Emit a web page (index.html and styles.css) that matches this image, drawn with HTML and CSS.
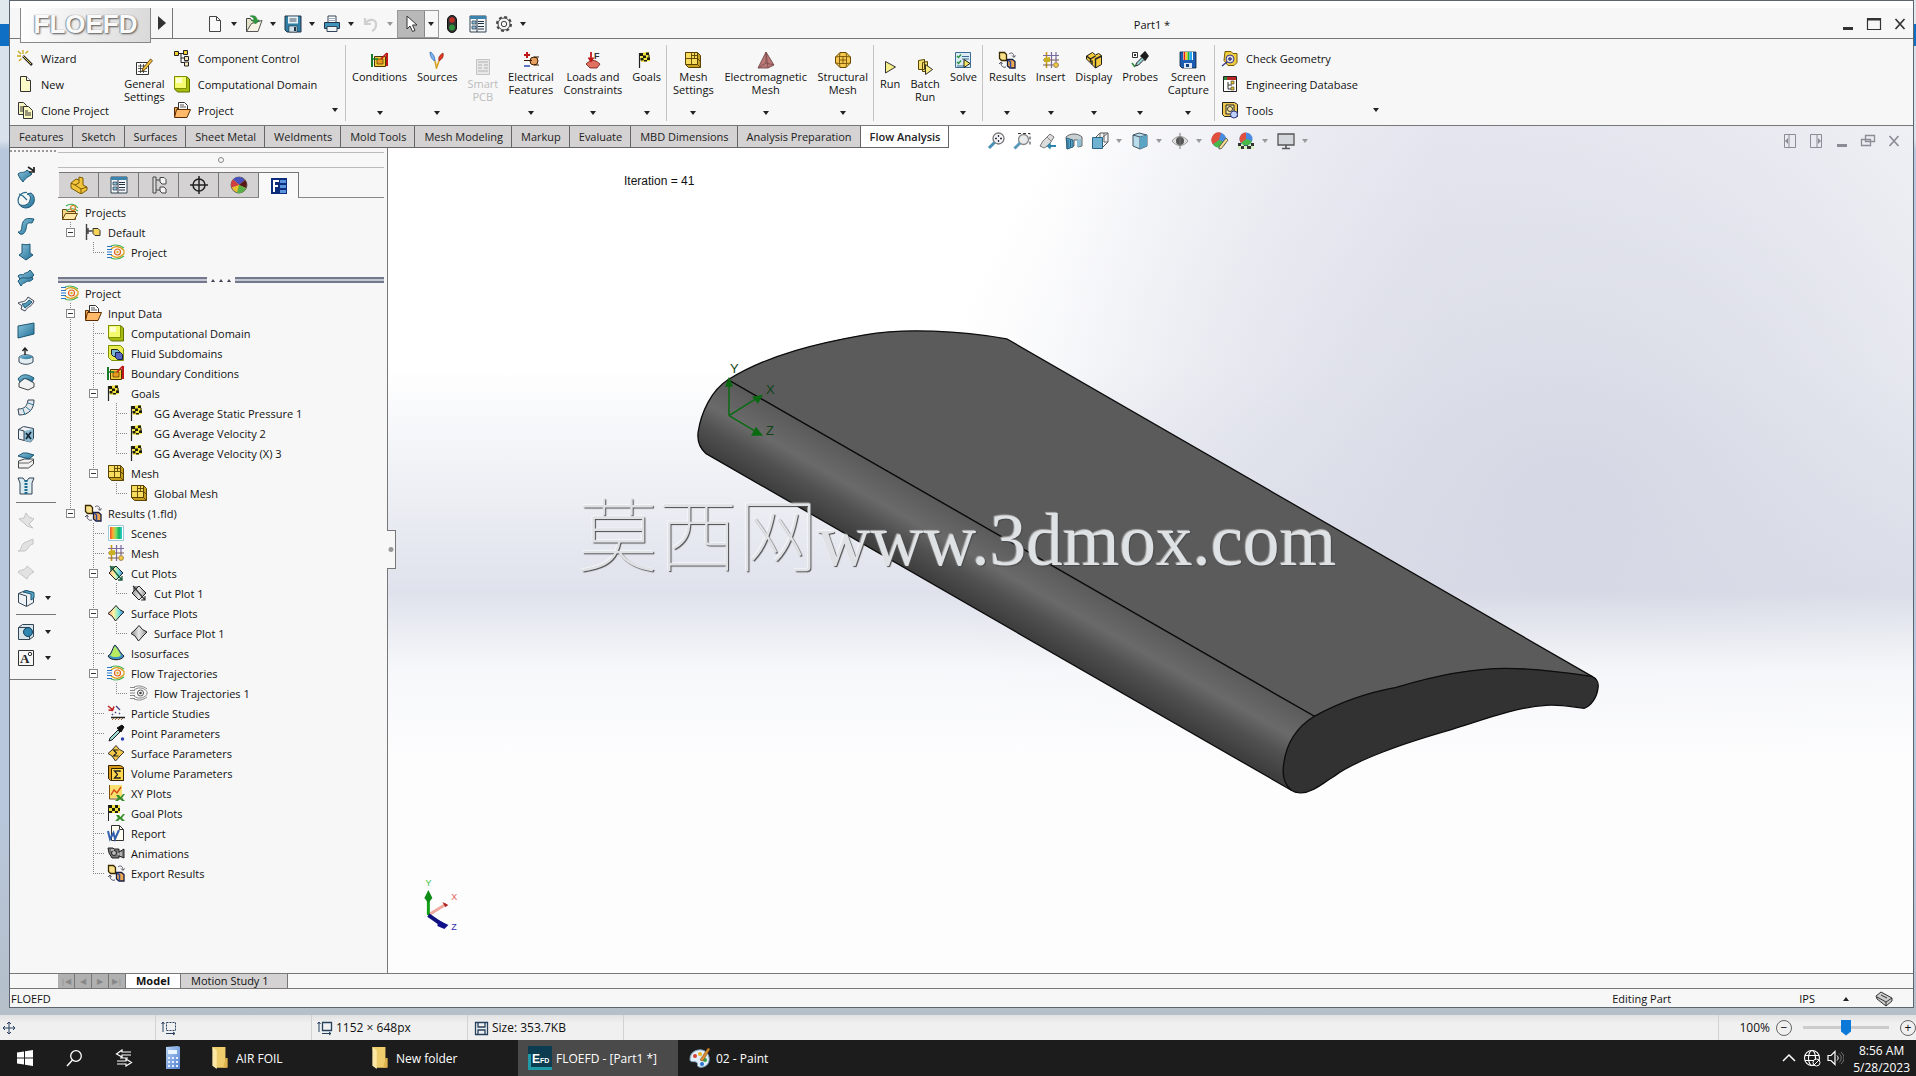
FILE: index.html
```html
<!DOCTYPE html>
<html lang="en">
  <head>
    <meta charset="UTF-8" />
    <meta name="viewport" content="width=device-width, initial-scale=1.0" />
    <title>FLOEFD - [Part1 *]</title>
    <link rel="stylesheet" href="styles.css">
  </head>
  <body>
    <!-- icon sprite -->
    <svg class="sprite" aria-hidden="true">
      <defs>
        <linearGradient id="g-blue" x1="0" y1="0" x2="1" y2="1"><stop offset="0" stop-color="#8cc4dc"/><stop offset="1" stop-color="#1f6f96"/></linearGradient>
        <linearGradient id="g-rainbow" x1="0" x2="1"><stop offset="0" stop-color="#f0502c"/><stop offset=".25" stop-color="#ffb030"/><stop offset=".5" stop-color="#7be06a"/><stop offset=".75" stop-color="#10b060"/><stop offset="1" stop-color="#2fd0d8"/></linearGradient>
        <linearGradient id="g-plot" x1="0" x2="1"><stop offset="0" stop-color="#ff9c7c"/><stop offset=".35" stop-color="#fff3a0"/><stop offset=".65" stop-color="#7fe8d8"/><stop offset="1" stop-color="#3c7ce0"/></linearGradient>
        <linearGradient id="g-gray" x1="0" x2="1"><stop offset="0" stop-color="#8a8a8a"/><stop offset=".5" stop-color="#e8e8e8"/><stop offset="1" stop-color="#909090"/></linearGradient>
        <linearGradient id="g-calc" x1="0" y1="0" x2="1" y2="1"><stop offset="0" stop-color="#b8d4f4"/><stop offset="1" stop-color="#4f7ed0"/></linearGradient>
      </defs>

      <!-- quick access -->
      <symbol id="i-doc" viewBox="0 0 18 18"><path d="M3.500 1.500h7l4 4v11h-11z" fill="#fafafa" stroke="#444"/><path d="M10.500 1.500v4h4" fill="none" stroke="#444"/></symbol>
      <symbol id="i-open" viewBox="0 0 18 18"><path d="M1.500 16.500v-13h4l1 2h6v11z" fill="#e4e2c8" stroke="#444"/><path d="M1.500 16.500l5-8 10.500-3-4 11z" fill="#f6f4e4" stroke="#555"/><path d="M5 1c5-1 7 1 7 4h2.500L10.500 9 6.500 5H9c0-2-1-3-4-4z" fill="#2f9a3c" stroke="#1a6a24" stroke-width=".5"/></symbol>
      <symbol id="i-save" viewBox="0 0 18 18"><path d="M1 1h16v16H3l-2-2z" fill="#2f7fa6" stroke="#234"/><path d="M4 1.500h10v7H4z" fill="#e8f2f6"/><path d="M5.500 4h7M5.500 6h7" stroke="#456"/><path d="M5 11h8v6H5z" fill="#cfe0e8" stroke="#234" stroke-width=".6"/><path d="M10 12h2v4h-2z" fill="#234"/></symbol>
      <symbol id="i-print" viewBox="0 0 18 18"><path d="M5 1h8v7H5z" fill="#fff" stroke="#345"/><path d="M1.500 7.500h15v6h-15z" fill="#3f93bc" stroke="#234"/><path d="M4 11.500h10v5H4z" fill="#eef4f6" stroke="#345"/><path d="M6 3.500h6M6 5.500h6" stroke="#9ab"/></symbol>
      <symbol id="i-undo" viewBox="0 0 18 18"><path d="M3 3v6h6M3.500 8.500C7 3 15 4 14 10c0 3-2 5-4 6" fill="none" stroke="#cfcfcf" stroke-width="2.200"/></symbol>
      <symbol id="i-cursor" viewBox="0 0 18 18"><path d="M5 1v13l3-3 2.500 5.500 2.500-1L10.500 10H15z" fill="#fff" stroke="#333"/></symbol>
      <symbol id="i-traffic" viewBox="0 0 18 18"><rect x="4.500" y=".5" width="9" height="17" rx="4.500" fill="#333" stroke="#111"/><circle cx="9" cy="5" r="2.700" fill="#c22f26"/><circle cx="9" cy="12.500" r="2.900" fill="#2f8f3c"/></symbol>
      <symbol id="i-list" viewBox="0 0 18 18"><path d="M1 1h16v16H1z" fill="#f4f6f8" stroke="#345"/><path d="M1 1h16v3H1z" fill="#3b84ad"/><path d="M3 6h4v3H3zM3 11h4v3H3z" fill="#8cc0da" stroke="#234" stroke-width=".7"/><path d="M9 6.500h6M9 8.500h6M9 11.500h6M9 14h6M8 4v13" stroke="#234"/></symbol>
      <symbol id="i-gear" viewBox="0 0 18 18"><circle cx="9" cy="9" r="7" fill="none" stroke="#444" stroke-width="2" stroke-dasharray="3 2.500"/><circle cx="9" cy="9" r="6" fill="#f4f4f4" stroke="#444"/><circle cx="9" cy="9" r="2.700" fill="none" stroke="#444"/></symbol>

      <!-- ribbon -->
      <symbol id="i-wand" viewBox="0 0 18 18"><path d="M7 7l9 9" stroke="#222" stroke-width="2.500"/><path d="M7 7l8 8" stroke="#e8d25a"/><path d="M7 1v4M2 2l3 3M12 2L9.500 4.500M1 7h4M3 12l2.500-2.500" stroke="#c8a818" stroke-width="1.300"/></symbol>
      <symbol id="i-page" viewBox="0 0 18 18"><path d="M4.500 1.500h6l4 4v11h-10z" fill="#fbfbc8" stroke="#333"/><path d="M10.500 1.500v4h4" fill="#fff" stroke="#333"/></symbol>
      <symbol id="i-clone" viewBox="0 0 18 18"><path d="M2.500 1.500h5l3 3v9h-8z" fill="#f6f4c0" stroke="#333"/><path d="M7.500 5.500h5l4 4v8h-9z" fill="#fbf8c0" stroke="#333"/><path d="M4 6h4M4 8h3M4 10h3M9 10h3M9 12h6M9 14h6" stroke="#333"/></symbol>
      <symbol id="i-notes" viewBox="0 0 18 18"><path d="M1.500 4.500h12v12h-12z" fill="#fff" stroke="#333"/><path d="M3 8h9M3 10.500h9M3 13.500h9M5.500 6v9M8.500 6v9" stroke="#333" stroke-width=".8"/><path d="M8 10l7.500-9 2 1.700-7.500 9-3 1.500z" fill="#f0c040" stroke="#553300" stroke-width=".8"/></symbol>
      <symbol id="i-comp" viewBox="0 0 18 18"><path d="M1.500 2.500h4v4h-4zM10.500 1.500h4v4h-4z" fill="#f4d030" stroke="#222"/><path d="M5.500 4.500h5M8 4.500v9h3M8 9h4" fill="none" stroke="#222"/><path d="M11.500 7.500h4v4h-4zM11.500 13h4v4h-4z" fill="#f4e8c0" stroke="#222"/></symbol>
      <symbol id="i-cube" viewBox="0 0 18 18"><path d="M1.500 1.500h12l3 2.500v13h-12l-3-3z" fill="#a8bc10" stroke="#5c7000"/><path d="M1.500 1.500h12v12h-12z" fill="#f4fb70" stroke="#7c9000"/><path d="M3 3h6v5H3z" fill="#fdffd0"/></symbol>
      <symbol id="i-infolder" viewBox="0 0 18 18"><path d="M5.500 9V1.500h6l3 3V9" fill="#fff" stroke="#333"/><path d="M7 4h4M7 6h6" stroke="#555"/><path d="M1.500 15.500v-9h3v2h9" fill="#f0a850" stroke="#5a2c00"/><path d="M1.500 16.500l2-8h14l-3.500 8z" fill="#ffb968" stroke="#5a2c00"/></symbol>
      <symbol id="i-cond" viewBox="0 0 18 18"><path d="M3.500 5.500h11v10h-11z" fill="#f3c93a" stroke="#4a3500"/><path d="M6 8h6v5H6z" fill="#e89a20" stroke="#4a3500" stroke-width=".7"/><path d="M1 3v13" stroke="#187a28" stroke-width="2"/><path d="M2 8h5" stroke="#187a28" stroke-width="1.500"/><path d="M16 2v13" stroke="#c01818" stroke-width="2"/><path d="M10 8l6-6" stroke="#c01818" stroke-width="1.700"/></symbol>
      <symbol id="i-src" viewBox="0 0 18 18"><path d="M2 1c3 1 5 5 5 9-3-1-5-5-5-9z" fill="#7ab6f0" stroke="#2a5aa0" stroke-width=".7"/><path d="M15 2c1 4-1 6-4 8-1-4 1-6 4-8z" fill="#e03a22" stroke="#8a1a10" stroke-width=".7"/><path d="M7 10l1.500 7L11 10" fill="none" stroke="#d8a020" stroke-width="1.600"/></symbol>
      <symbol id="i-pcb" viewBox="0 0 18 18"><path d="M2.500 1.500h13v15h-13z" fill="#e8e8e8" stroke="#c4c4c4"/><path d="M4 4h10M4 7h4M10 7h4M4 10h4M10 10h4M4 13h10" stroke="#c4c4c4" stroke-width="1.500"/></symbol>
      <symbol id="i-elec" viewBox="0 0 18 18"><path d="M2 4h6M5 1v6" stroke="#c01818" stroke-width="2"/><path d="M2 15h6" stroke="#2848b8" stroke-width="1.500"/><circle cx="12" cy="10" r="4" fill="#e8a060" stroke="#3a1c00"/><path d="M2 9.500h8M12 6h5M12 14h5" stroke="#3a1c00"/></symbol>
      <symbol id="i-flag" viewBox="0 0 18 18"><path d="M1.500 2v15" stroke="#222" stroke-width="1.200"/><path d="M2 2l9-1 1 9-9 1z" fill="#f2e23c"/><path d="M2 2h3v3H2zM8 1.500h3v2.500H8zM5 4.500h3v2.500H5zM9 6.500h3V9H9zM2.500 7h3v2.500h-3zM10.500 4h1v2.500h-1zM6 9h3v1.500H6z" fill="#1c1c10"/></symbol>
      <symbol id="i-mesh" viewBox="0 0 18 18"><path d="M1.500 1.500h12l3 3v12h-12l-3-3z" fill="#c8a020" stroke="#5a4200"/><path d="M1.500 1.500h12v12h-12z" fill="#f8dc60" stroke="#5a4200"/><path d="M7.500 1.500v12M1.500 7.500h12M10.500 1.500v6M7.500 4.500h6M13.500 13.500l3 3M13.500 7.500l3 3" stroke="#5a4200" stroke-width=".9"/></symbol>
      <symbol id="i-em" viewBox="0 0 18 18"><path d="M9 1l8 13-6 3H1z" fill="#b87878" stroke="#6a3c3c" stroke-width=".8"/><path d="M9 1l2 16M1 17l8-5 8 2M9 1v11" stroke="#7c4a4a" stroke-width=".8" fill="none"/></symbol>
      <symbol id="i-struct" viewBox="0 0 18 18"><path d="M6 1.500h6L16.500 6v6L12 16.500H6L1.500 12V6z" fill="#f4c850" stroke="#6a4800"/><path d="M5.500 5.500h7v7h-7zM1.500 6l4-.5L6 1.500M12 1.500l.5 4 4 .5M16.500 12l-4 .5-.5 4M6 16.500l-.5-4-4-.5M9 5.500v7M5.500 9h7" fill="none" stroke="#6a4800" stroke-width=".8"/></symbol>
      <symbol id="i-run" viewBox="0 0 18 18"><path d="M4.500 3.500l10 5.500-10 6z" fill="#f6ec88" stroke="#333"/></symbol>
      <symbol id="i-batch" viewBox="0 0 18 18"><path d="M2.500 2.500l6-1v10h-6zM6.500 4.500l5-1v10h-5z" fill="#f4e070" stroke="#5a4600"/><path d="M9.500 6.500l7 5-7 5z" fill="#f8ec80" stroke="#333"/></symbol>
      <symbol id="i-solve" viewBox="0 0 18 18"><path d="M1.500 1.500h15v15h-15z" fill="#dcecf4" stroke="#3c6c94"/><path d="M3 5l1.500 1.500L7 3.500M3 11l1.500 1.500L7 9.500" fill="none" stroke="#28903c" stroke-width="1.300"/><path d="M8 5.500h7M8 8h7M3 15h7" stroke="#3c6c94"/><path d="M10 8.500l6 4-6 4z" fill="#f6e860" stroke="#222"/></symbol>
      <symbol id="i-results" viewBox="0 0 18 18"><path d="M1.500 1.500h5l2 2v6h-5l-2-2z" fill="#f8e088" stroke="#3a2800" stroke-width="1.300"/><path d="M9.500 8.500h5l2.500 2v6.500h-5l-2.500-2z" fill="#f0a850" stroke="#141c40" stroke-width="1.300"/><path d="M10 9l2.500 2v6" fill="none" stroke="#2848a0" stroke-width="1.500"/><path d="M11 3c2-2 5-1 5 3M3 12c0 3 2 5 5 4M14 4.500l2 2 1.500-2M4.500 13L3 11l-2 2" fill="none" stroke="#556"/></symbol>
      <symbol id="i-grid" viewBox="0 0 18 18"><path d="M4.500 1v16" stroke="#c89818" stroke-width="1.600"/><path d="M9.500 1v16M14 1v16M1 4.500h16" stroke="#7a6aa0" stroke-width="1.200"/><path d="M1 9h16M1 14h16" stroke="#7a5a50" stroke-width="1.200"/><path d="M2 7l6-1v5H2z" fill="#c8b020"/><path d="M12 12h4v4h-4z" fill="#f4cc50" stroke="#a07818" stroke-width=".6"/></symbol>
      <symbol id="i-display" viewBox="0 0 18 18"><path d="M1.500 5l6-3.500 3 2.500 3-1.500 3 2v9l-6 3.500-9-9z" fill="#f2c83c" stroke="#222"/><path d="M1.500 5l4 3v3M5.500 8l5-3M10.500 17V8l6-3M7 9.500v4" fill="none" stroke="#222" stroke-width="1.400"/></symbol>
      <symbol id="i-probe" viewBox="0 0 18 18"><path d="M1.500 1.500h5v5h-5z" fill="#fff" stroke="#333"/><path d="M3 3h2v2H3z" fill="#333"/><path d="M10 5l4 4 3-4-3-4z" fill="#1c1c1c" stroke="#1c1c1c" stroke-width="1.500"/><path d="M11 6.500l-5.500 5.500-1 3 3-1 6-6z" fill="#9ad8d8" stroke="#222"/><path d="M1 12l3 4" stroke="#2a8a3c" stroke-width="1.500"/></symbol>
      <symbol id="i-capture" viewBox="0 0 18 18"><path d="M1 1h16v16H3l-2-2z" fill="#1c5cb4" stroke="#123" stroke-width=".8"/><path d="M4 1h10v8H4z" fill="#fff"/><path d="M4.500 1h2v8h-2z" fill="#e02818"/><path d="M6.500 1h2v8h-2z" fill="#f8d820"/><path d="M8.500 1h2v8h-2z" fill="#28b03c"/><path d="M10.500 1h2.500v8h-2.500z" fill="#28a8f0"/><path d="M5 12h8v5H5z" fill="#dce8f4"/><path d="M7 13h3v3H7z" fill="#123c80"/></symbol>
      <symbol id="i-checkgeo" viewBox="0 0 18 18"><path d="M4 2.500h6l2 2h4v9l-3 3H7l-4-5z" fill="#f0cc40" stroke="#7a5c00"/><circle cx="9" cy="10" r="4" fill="#dce0f8" fill-opacity=".8" stroke="#3a3a90"/><path d="M7 10h4M9 8v4M6 13l-5 4" stroke="#3a3a90" stroke-width="1.400"/></symbol>
      <symbol id="i-engdb" viewBox="0 0 18 18"><path d="M2.500 1.500h13v15h-13z" fill="#fff" stroke="#222"/><path d="M3 2h12v3H3z" fill="#b82828"/><path d="M3 2h3v3H3z" fill="#2a8a3c"/><path d="M7 7v7h4M7 10h4" fill="none" stroke="#333"/><path d="M10 6h3v3h-3zM10 12h3v3h-3z" fill="#e8c030" stroke="#333" stroke-width=".6"/></symbol>
      <symbol id="i-tools" viewBox="0 0 18 18"><path d="M1.500 1.500h12l3 2v12h-13l-2-2z" fill="#f0c850" stroke="#222"/><path d="M5 4h8v9H5z" fill="#fbe8a0" stroke="#222"/><circle cx="9" cy="8" r="2.500" fill="none" stroke="#333"/><circle cx="13" cy="13.500" r="3.500" fill="#c0d0f8" stroke="#2a3c8a"/></symbol>

      <!-- view toolbar -->
      <symbol id="i-zfit" viewBox="0 0 18 18"><circle cx="11.500" cy="6.500" r="5.500" fill="#f2f4f6" stroke="#777" stroke-width="1.300"/><path d="M11.500 3v2M11.500 8v2M8 6.500h2M13 6.500h2" stroke="#334" stroke-width="1.300"/><path d="M7.500 10.500L2 16" stroke="#4a8fb4" stroke-width="3"/></symbol>
      <symbol id="i-zarea" viewBox="0 0 18 18"><path d="M5 1.500h12v12" fill="none" stroke="#333" stroke-dasharray="3 2"/><circle cx="10.500" cy="7.500" r="5" fill="#e8eaec" stroke="#888" stroke-width="1.300"/><path d="M7 11l-5.500 5.500" stroke="#5a98ba" stroke-width="3"/></symbol>
      <symbol id="i-prev" viewBox="0 0 18 18"><path d="M1 14l3-5 7-7 4 3-5 8-5 3z" fill="#dcdcdc" stroke="#777"/><path d="M8 5l4 4" stroke="#888"/><path d="M9 14h8M11.500 11.500L9 14l2.500 2.500" stroke="#2f86ac" stroke-width="1.800" fill="none"/></symbol>
      <symbol id="i-section" viewBox="0 0 18 18"><path d="M1 5c4-4 12-4 16 0v9l-4 1V8H9v6l-7 3z" fill="#c8d0d4" stroke="#555" stroke-width=".9"/><path d="M1.500 6L8 8v7l-6 2z" fill="#58a4c8" stroke="#2a6484"/><path d="M12 8l4-1v7l-4 1z" fill="#8cc0d8"/><path d="M3 8v8M5.500 8v7" stroke="#2a6484"/></symbol>
      <symbol id="i-orient" viewBox="0 0 18 18"><path d="M5 5l4-4h8v9l-5 5" fill="#f4f4f4" stroke="#555"/><path d="M9 1v4M13 1v9h4M12 5l5-4" stroke="#666" fill="none"/><path d="M1.500 5.500h10v11h-10z" fill="#6fb2d2" stroke="#2a6484"/></symbol>
      <symbol id="i-shade" viewBox="0 0 18 18"><path d="M2 3l6-2 8 2v11l-7 3-7-3z" fill="#b8dcea" stroke="#456"/><path d="M2 3l7 2v12M9 5l7-2" fill="none" stroke="#456"/><path d="M9 5l7-2v11l-7 3z" fill="#5aa4c4"/></symbol>
      <symbol id="i-eye" viewBox="0 0 18 18"><path d="M1 9c4-6 12-6 16 0-4 6-12 6-16 0z" fill="#ddd" stroke="#999"/><circle cx="9" cy="9" r="4" fill="#555"/><path d="M9 1v16" stroke="#777"/></symbol>
      <symbol id="i-appear" viewBox="0 0 18 18"><circle cx="8" cy="8" r="7.500" fill="#4a8ae0"/><path d="M8 8L10 .7A7.500 7.500 0 0 0 2 12.500z" fill="#e0503c"/><path d="M8 8l-6 4.500a7.500 7.500 0 0 0 13-2z" fill="#48b848"/><path d="M8 15l7-9 2 2-6.500 8.500L8 17z" fill="#f4dc90" stroke="#444" stroke-width=".8"/></symbol>
      <symbol id="i-scene" viewBox="0 0 18 18"><path d="M1 11h16v6H1z" fill="#333"/><path d="M4 11h3v3H4zM11 11h3v3h-3zM1 14h3v3H1zM7 14h3v3H7zM14 14h3v3h-3z" fill="#d8f0c0"/><circle cx="9" cy="7" r="6.500" fill="#4a8ae0"/><path d="M9 7V.5A6.500 6.500 0 0 0 4 11z" fill="#e0503c"/><path d="M9 7l-5 4a6.500 6.500 0 0 0 11-2z" fill="#48b848"/></symbol>
      <symbol id="i-monitor" viewBox="0 0 18 18"><path d="M1 2h16v11H1z" fill="#d4d8dc" stroke="#555" stroke-width="1.300"/><path d="M9 13v3M5 16.500h8" stroke="#555" stroke-width="1.600"/></symbol>

      <!-- panel tabs -->
      <symbol id="i-part" viewBox="0 0 18 18"><path d="M1 7l5-4 3 1V1l4 1v7l4 2v3l-6 4-10-6z" fill="#f2c43c" stroke="#7a5a00"/><path d="M1 7l4 2 4-2V4M5 9l6 4 6-2M11 13v5" fill="none" stroke="#7a5a00"/></symbol>
      <symbol id="i-config" viewBox="0 0 18 18"><path d="M3 1h3v16H3zM6 4h4M6 14h4" fill="#ddd" stroke="#444"/><path d="M10 1.500h4l2 2V8h-4l-2-2zM10 11h4l2 2v4h-4l-2-2z" fill="#f4f4f4" stroke="#444"/></symbol>
      <symbol id="i-target" viewBox="0 0 18 18"><circle cx="9" cy="9" r="6" fill="none" stroke="#222" stroke-width="1.500"/><path d="M9 0v18M0 9h18" stroke="#222" stroke-width="1.500"/></symbol>
      <symbol id="i-sphere" viewBox="0 0 18 18"><circle cx="9" cy="9" r="8" fill="#e8c030" stroke="#666"/><path d="M9 9L3 3.500A8 8 0 0 1 15 4z" fill="#4a50c0"/><path d="M9 9l6-5a8 8 0 0 1 1 8z" fill="#581818"/><path d="M9 9L1.500 11.500A8 8 0 0 1 3 3.500z" fill="#d04040"/><path d="M9 9l7 3a8 8 0 0 1-9 5z" fill="#58b048"/></symbol>
      <symbol id="i-floefd" viewBox="0 0 18 18"><path d="M1 1h16v16H1z" fill="#0c2c7c"/><path d="M3 3h6v2H5v3h3v2H5v5H3z" fill="#fff"/><path d="M10 3h6v3h-6zM10 8h6v3h-6zM10 13h6v3h-6z" fill="#5a94dc"/></symbol>

      <!-- tree -->
      <symbol id="i-flow" viewBox="0 0 18 18"><path d="M4 3c5-2 9-1 13 2M4 15c5 2 9 1 13-2" fill="none" stroke="#48b058" stroke-width="1.200"/><path d="M4 6c4-3 9-3 13 1.500v3c-4 4.500-9 4.500-13 1.500" fill="none" stroke="#d8a018" stroke-width="1.200"/><path d="M0 3.500h5M0 6.500h5M0 9h5M0 11.500h5M0 14.500h5" stroke="#2878c8"/><circle cx="10.500" cy="9" r="3" fill="none" stroke="#e06020" stroke-width="1.200"/><circle cx="10.500" cy="9" r="1.200" fill="#d8b020"/></symbol>
      <symbol id="i-flowgray" viewBox="0 0 18 18"><path d="M4 3c5-2 9-1 13 2M4 15c5 2 9 1 13-2M4 6c4-3 9-3 13 1.500v3c-4 4.500-9 4.500-13 1.500M0 3.500h5M0 6.500h5M0 9h5M0 11.500h5M0 14.500h5" fill="none" stroke="#888"/><circle cx="10.500" cy="9" r="3" fill="none" stroke="#555"/><circle cx="10.500" cy="9" r="1.300" fill="#444"/></symbol>
      <symbol id="i-projects" viewBox="0 0 18 18"><path d="M1.500 16.500v-10h4l1 2h8v8z" fill="#f8d888" stroke="#6a4a10"/><path d="M1.500 16.500l3-6h12l-3 6z" fill="#ffe8a8" stroke="#6a4a10"/><path d="M5 3c4-3 9-2 12 2M5 8c4-3 8-3 12 0" fill="none" stroke="#48b058" stroke-width="1.200"/><circle cx="12" cy="5" r="2.500" fill="none" stroke="#e08020" stroke-width="1.200"/></symbol>
      <symbol id="i-default" viewBox="0 0 18 18"><path d="M2.500 1v16M2.500 8h6M4 5v6" fill="none" stroke="#444" stroke-width="1.400"/><path d="M9 5.500h5l2 2v5h-5l-2-2z" fill="#f6d458" stroke="#333"/></symbol>
      <symbol id="i-fluid" viewBox="0 0 18 18"><path d="M1.500 1.500h12l3 3v12h-12l-3-3z" fill="#e8ec50" stroke="#7c9000"/><path d="M4.500 5.500h6l2 2v5h-6l-2-2z" fill="#78b8d0" stroke="#222"/><path d="M8.500 8.500h5l2 2v5h-5l-2-2z" fill="#5868c0" stroke="#111c50"/></symbol>
      <symbol id="i-scenes" viewBox="0 0 18 18"><path d="M1.500 1.500h15v15h-15z" fill="#fff" stroke="#9cc8d8"/><path d="M3 3h12v12H3z" fill="url(#g-rainbow)"/></symbol>
      <symbol id="i-surf" viewBox="0 0 18 18"><path d="M9 1.500l3.500 4L17 8l-4 4-4.500 5L5 12 1 9.500l4-3.500z" fill="url(#g-plot)" stroke="#222"/></symbol>
      <symbol id="i-surfgray" viewBox="0 0 18 18"><path d="M9 1.500l3.500 4L17 8l-4 4-4.500 5L5 12 1 9.500l4-3.500z" fill="url(#g-gray)" stroke="#222"/></symbol>
      <symbol id="i-cut" viewBox="0 0 18 18"><path d="M9 2l7 7-7 7-7-7z" fill="url(#g-plot)" stroke="#222"/><path d="M3 2l12 14M4 7V3h4M15 12v4h-4" fill="none" stroke="#1a5a3a" stroke-width="1.300"/></symbol>
      <symbol id="i-cutgray" viewBox="0 0 18 18"><path d="M9 2l7 7-7 7-7-7z" fill="url(#g-gray)" stroke="#222"/><path d="M3 2l12 14M4 7V3h4M15 12v4h-4" fill="none" stroke="#333" stroke-width="1.200"/></symbol>
      <symbol id="i-iso" viewBox="0 0 18 18"><path d="M1 12c4-2 5-10 7-11 2 1 5 8 9 11-2 5-14 5-16 0z" fill="#3c90c8" stroke="#222"/><path d="M3 11.500C6 9 6 3.500 8 2.500c2 1 4 6 6 9-3 2-8 2-11 0z" fill="#b8ec60"/></symbol>
      <symbol id="i-particle" viewBox="0 0 18 18"><path d="M1 2l5 4M7 2.500L5.500 6.500l-4-.5" stroke="#c02020" stroke-width="1.600" fill="none"/><path d="M9 2l4 4M8 8l1 1M12 9l1 1M5 10l1 1" stroke="#448" stroke-width="1.400"/><path d="M4 13.500h14" stroke="#222" stroke-width="1.500"/><path d="M5 16l2-2M8 16l2-2M11 16l2-2M14 16l2-2" stroke="#a06030"/></symbol>
      <symbol id="i-point" viewBox="0 0 18 18"><path d="M10 4l4 4 3-5-2-2z" fill="#111" stroke="#111"/><path d="M11 6l-8 8-1 3 3-1 8-8z" fill="#9ad8d0" stroke="#222"/><circle cx="15.500" cy="15" r="1.700" fill="#2a40b0"/></symbol>
      <symbol id="i-surfpar" viewBox="0 0 18 18"><path d="M9 1.500l3.500 4L17 8l-4 4-4.500 5L5 12 1 9.500l4-3.500z" fill="#f6c848" stroke="#333"/><path d="M11.500 6H6.500l3 3-3 3h5" fill="none" stroke="#222" stroke-width="1.200"/></symbol>
      <symbol id="i-volpar" viewBox="0 0 18 18"><path d="M1.500 1.500h12l3 2v13h-13l-2-2z" fill="#d89818" stroke="#332200"/><path d="M4.500 4.500h12v12h-12z" fill="#ffd850" stroke="#332200"/><path d="M13 8V7H7.500l3 3.500-3 3.500H13v-1" fill="none" stroke="#222" stroke-width="1.300"/></symbol>
      <symbol id="i-xy" viewBox="0 0 18 18"><path d="M2 1h13v13H2z" fill="#fbe070"/><path d="M2.500 1v14H16" fill="none" stroke="#7a4a00"/><path d="M4 11l3-5 3 3 4-6" fill="none" stroke="#d04818" stroke-width="1.400"/><path d="M9 11h3l1.500 2L16 10h2l-3 4 3 3h-3l-2-2-2 2H8l3-3z" fill="#38902c"/></symbol>
      <symbol id="i-goalplot" viewBox="0 0 18 18"><path d="M1.500 1v16" stroke="#222"/><path d="M2 1h11v8H2z" fill="#f2e23c"/><path d="M2 1h3v3H2zM8 1h3v3H8zM5 4h3v3H5zM11 4h2v3h-2zM2 7h3v2H2zM8 7h3v2H8z" fill="#1c1c10"/><path d="M9 11h3l1.500 2L16 10h2l-3 4 3 3h-3l-2-2-2 2H8l3-3z" fill="#38902c"/></symbol>
      <symbol id="i-report" viewBox="0 0 18 18"><path d="M4.500 1.500h8l4 4v11h-12z" fill="#fffef0" stroke="#333"/><path d="M12.500 1.500v4h4" fill="none" stroke="#333"/><path d="M1 7l2 8 3.500-6L8 15l4-9" fill="none" stroke="#3460b0" stroke-width="2"/></symbol>
      <symbol id="i-anim" viewBox="0 0 18 18"><path d="M1 4h5l1 1h5v3l5-3v9l-5-2v2H5L2 9z" fill="#777" stroke="#222"/><circle cx="7" cy="9" r="2.500" fill="#bbb" stroke="#222"/><path d="M10.500 10h2M14 8v4M4 6h3" stroke="#eee"/></symbol>

      <!-- surface toolbar -->
      <symbol id="i-sheet" viewBox="0 0 18 18"><path d="M1 7c3-3 5 0 6-2s3 0 6-4l4 5-2 2 1 2c-4 4-5 1-7 3s-3 0-5 4L1 12l2-2z" fill="url(#g-blue)" stroke="#1c5674"/><path d="M3 10c4-3 7 1 12-2" fill="none" stroke="#1c5674"/></symbol>
      <symbol id="i-extrude" viewBox="0 0 18 18"><path d="M1 9c3-3 6 0 9-4l5 4c-3 3-6 3-9 8-2-2-4-5-5-8z" fill="url(#g-blue)" stroke="#1c5674"/><path d="M11 2l6 4M17 2v5h-5" fill="none" stroke="#222" stroke-width="1.700"/></symbol>
      <symbol id="i-revolve" viewBox="0 0 18 18"><path d="M14 2c3 2 4 6 3 9-2 7-12 8-15 2 4 3 10 1 11-4 1-3 0-5-3-6z" fill="url(#g-blue)" stroke="#1c5674"/><path d="M2 13A8 8 0 0 1 10 1.500M2 3l4 2 4 4" fill="none" stroke="#2a6a8a" stroke-width="1.200"/></symbol>
      <symbol id="i-sweep" viewBox="0 0 18 18"><path d="M1 15c5 0 3-6 5-10s6-4 11-3l-2 4c-6-1-5 2-6 6s-3 6-6 5z" fill="url(#g-blue)" stroke="#1c5674"/></symbol>
      <symbol id="i-loft" viewBox="0 0 18 18"><path d="M5 1c2 1 6 1 8 0v9l3 2-7 5-7-5 3-2z" fill="url(#g-blue)" stroke="#1c5674"/></symbol>
      <symbol id="i-offset" viewBox="0 0 18 18"><path d="M1 8c4-2 7 0 10-6l6 4c-2 6-6 5-9 10L4 14l1-3z" fill="#eef4f6" stroke="#445"/><path d="M5 9c3 0 5-1 7-4l3 2c-2 3-4 3-7 6z" fill="url(#g-blue)" stroke="#1c5674"/></symbol>
      <symbol id="i-plane" viewBox="0 0 18 18"><path d="M1 5l16-3v11L1 17z" fill="url(#g-blue)" stroke="#1c5674"/></symbol>
      <symbol id="i-thick" viewBox="0 0 18 18"><path d="M2 10c4-3 10-3 14 0v5c-4 3-10 3-14 0z" fill="#e4eef2" stroke="#345"/><path d="M2 10c4-3 10-3 14 0-4 3-10 3-14 0z" fill="url(#g-blue)"/><path d="M8 8V2M5.500 4L8 1l2.500 3" fill="none" stroke="#222" stroke-width="1.400"/></symbol>
      <symbol id="i-fill" viewBox="0 0 18 18"><path d="M2 10l6-5 9 5v4l-6 3-9-3z" fill="#f2f2f2" stroke="#444"/><path d="M1 6c4-6 10-5 16-1l-2 4C11 5 6 4 3 9z" fill="url(#g-blue)" stroke="#1c5674"/></symbol>
      <symbol id="i-elbow" viewBox="0 0 18 18"><path d="M11 1h6c0 9-5 15-15 15l-1-6c7 0 9-3 10-9z" fill="#e4e8ea" stroke="#345"/><path d="M11 4l6 2M9 8l5 4M6 10l2 6" stroke="#2a7ca0"/></symbol>
      <symbol id="i-delface" viewBox="0 0 18 18"><path d="M1.500 4.500l5-3 10 2v10l-3 3.500-12-3z" fill="#eef2f4" stroke="#345"/><path d="M7 6l9-2v10l-3 3-6-1.500z" fill="#8cbcd2"/><path d="M1.500 4.500L7 6v10" fill="none" stroke="#345"/><path d="M9 8l5 6M14 7l-5 7" stroke="#123" stroke-width="1.700"/></symbol>
      <symbol id="i-replace" viewBox="0 0 18 18"><path d="M1.500 10l6-2h9v5l-5 4h-10z" fill="#f2f2f2" stroke="#444"/><path d="M1.500 12h10l5-3" fill="none" stroke="#666"/><path d="M1 5l5-3h4l7 2-5 4-4-1z" fill="url(#g-blue)" stroke="#1c5674"/></symbol>
      <symbol id="i-knit" viewBox="0 0 18 18"><path d="M1 1h5l3 4 3-4h5l-2 5v11H3V6z" fill="#dcebf0" stroke="#345"/><path d="M9 3v14" stroke="#1c6c90" stroke-width="3" stroke-dasharray="2 1"/></symbol>
      <symbol id="i-dim1" viewBox="0 0 18 18"><path d="M2 8l5-1 2-5 3 4 5 2-5 5 4 4-6-2-3-3z" fill="#e2e2e2" stroke="#c4c4c4"/></symbol>
      <symbol id="i-dim2" viewBox="0 0 18 18"><path d="M1 14c4 0 2-5 6-8l9-4v5c-5 1-4 5-8 7z" fill="#e2e2e2" stroke="#c4c4c4"/></symbol>
      <symbol id="i-dim3" viewBox="0 0 18 18"><path d="M1 9c4-4 6 0 9-6l7 6c-4 2-5 3-7 7z" fill="#e2e2e2" stroke="#c4c4c4"/></symbol>
      <symbol id="i-box" viewBox="0 0 18 18"><path d="M1.500 4.500l7-3 8 2v10l-7 4-8-4z" fill="#eef2f4" stroke="#345"/><path d="M6 3l8 2v6l3-2V3.500l-8-2z" fill="#5aa4c8" stroke="#1c5674"/><path d="M9.500 7v10M1.500 4.500l8 2.500" stroke="#345"/></symbol>
      <symbol id="i-hole" viewBox="0 0 18 18"><path d="M1.500 4.500l4-3h11v12l-4 3h-11z" fill="#d8e6ec" stroke="#345"/><path d="M1.500 4.500h11v12" fill="none" stroke="#345"/><circle cx="11" cy="9" r="4.500" fill="#2f86b0" stroke="#123c58"/></symbol>
      <symbol id="i-tag" viewBox="0 0 18 18"><path d="M1 6l5-4 11 6v3l-6 5L2 9z" fill="#ccc" stroke="#333"/><path d="M2 7l9 5 6-4M11 12v4M6 5l6 3" fill="none" stroke="#333"/></symbol>

      <!-- paint status and taskbar -->
      <symbol id="i-move" viewBox="0 0 18 18"><path d="M9 3v12M3 9h12M7 5l2-2 2 2M7 13l2 2 2-2M5 7L3 9l2 2M13 7l2 2-2 2" fill="none" stroke="#26415e"/></symbol>
      <symbol id="i-select" viewBox="0 0 18 18"><path d="M6.500 3.500h9v8h-9z" fill="none" stroke="#26415e" stroke-dasharray="2 1"/><path d="M3 13V3M1.500 5L3 3l1.500 2M6 14.500h9M13 13l2 1.500-2 1.500" fill="none" stroke="#26415e"/></symbol>
      <symbol id="i-size" viewBox="0 0 18 18"><path d="M6.500 3.500h9v8h-9z" fill="none" stroke="#26415e" stroke-width="1.300"/><path d="M3 13V3M1.500 5L3 3l1.500 2M6 14.500h9M13 13l2 1.500-2 1.500" fill="none" stroke="#26415e"/></symbol>
      <symbol id="i-disk" viewBox="0 0 18 18"><path d="M3.500 3.500h12v12h-12zM6 3.500V8h7V3.500M6 15.500V11h7v4.500" fill="none" stroke="#26415e" stroke-width="1.300"/></symbol>
      <symbol id="i-win" viewBox="0 0 18 18"><path d="M1 3.500L8 2.500V8.500H1zM9 2.300L17 1v7.500H9zM1 9.500h7v6L1 14.500zM9 9.500h8V17L9 15.700z" fill="#fff"/></symbol>
      <symbol id="i-search" viewBox="0 0 18 18"><circle cx="11" cy="7" r="5.300" fill="none" stroke="#fff" stroke-width="1.300"/><path d="M7.500 11L2 17" stroke="#fff" stroke-width="1.400"/></symbol>
      <symbol id="i-switch" viewBox="0 0 18 18"><path d="M16 3H7V1L1.500 5 7 8V6h9M2 12h9v-2l5.500 3.500L11 17v-2H2M5 9h8" fill="none" stroke="#fff" stroke-width="1.200"/></symbol>
      <symbol id="i-calc" viewBox="0 0 18 24"><path d="M2 1l12-1 2 1v22H2z" fill="url(#g-calc)"/><path d="M4 4h9v4H4z" fill="#eaf6ff"/><path d="M4 11h2v2H4zM8 11h2v2H8zM12 11h2v2h-2zM4 15h2v2H4zM8 15h2v2H8zM12 15h2v2h-2zM4 19h2v2H4zM8 19h2v2H8zM12 19h2v2h-2z" fill="#e4f0ff"/></symbol>
      <symbol id="i-dir" viewBox="0 0 18 22"><path d="M2 1h12v19H5z" fill="#f0cd6c"/><path d="M2 1l4 3v17l-4-3z" fill="#fde9a4"/><path d="M14 11h2v9h-4z" fill="#e0b44c"/></symbol>
      <symbol id="i-paint" viewBox="0 0 24 24"><path d="M2 13C2 6 9 3 14 4s8 6 7 11-6 7-10 6c-3-1 0-4-3-5s-6 1-6-3z" fill="#dfeef8" stroke="#7aa0bc"/><circle cx="7" cy="10" r="2" fill="#d84030"/><circle cx="12" cy="8" r="2" fill="#e8b020"/><circle cx="17" cy="14" r="2" fill="#38a048"/><circle cx="14" cy="18" r="2" fill="#2c74d0"/><path d="M12 14l8-12 2 1-7 12z" fill="#d89030" stroke="#7a4810" stroke-width=".6"/></symbol>
      <symbol id="i-chev" viewBox="0 0 18 18"><path d="M3 12l6-6 6 6" fill="none" stroke="#fff" stroke-width="1.500"/></symbol>
      <symbol id="i-globe" viewBox="0 0 18 18"><g fill="none" stroke="#fff" stroke-width="1.100"><circle cx="9" cy="9" r="7.500"/><ellipse cx="9" cy="9" rx="3.500" ry="7.500"/><path d="M2 6.500h14M2 11.500h9"/></g><circle cx="13.500" cy="13.500" r="3.500" fill="#1c1c1c" stroke="#fff"/><path d="M11 16l5-5" stroke="#fff"/></symbol>
      <symbol id="i-sound" viewBox="0 0 18 18"><path d="M2 6.500h3l4-4v13l-4-4H2z" fill="none" stroke="#fff" stroke-width="1.200"/><path d="M11 6.500c1.500 1.500 1.500 3.500 0 5" fill="none" stroke="#fff"/><path d="M13 4.500c3 3 3 6 0 9M15 3c4 4 4 8 0 12" fill="none" stroke="#777"/></symbol>

      <!-- window buttons -->
      <symbol id="i-min" viewBox="0 0 18 18"><path d="M4 12h10v3H4z" fill="currentColor"/></symbol>
      <symbol id="i-max" viewBox="0 0 18 18"><path d="M2.500 3.500h13v11h-13z" fill="none" stroke="currentColor" stroke-width="1.200"/><path d="M2 3h14v2.500H2z" fill="currentColor"/></symbol>
      <symbol id="i-close" viewBox="0 0 18 18"><path d="M4.500 4l9 10M13.500 4l-9 10" stroke="currentColor" stroke-width="1.700"/></symbol>
      <symbol id="i-restore" viewBox="0 0 18 18"><path d="M6.500 3.500h9v6h-9zM2.500 7.500h9v6h-9z" fill="none" stroke="currentColor" stroke-width="1.300"/></symbol>
      <symbol id="i-dockl" viewBox="0 0 18 18"><path d="M3.500 2.500h11v13h-11z" fill="none" stroke="currentColor"/><path d="M8 2v14" stroke="currentColor"/><path d="M7 6v6L4 9z" fill="currentColor"/></symbol>
      <symbol id="i-dockr" viewBox="0 0 18 18"><path d="M3.500 2.500h11v13h-11z" fill="none" stroke="currentColor"/><path d="M10 2v14" stroke="currentColor"/><path d="M11 6v6l3-3z" fill="currentColor"/></symbol>
    </svg>

    <div class="desktop">
      <div class="window">
        <header class="titlebar">
          <div class="logo">FLOEFD</div>
          <button class="logo-arrow" aria-label="Show menu"></button>
          <div class="quick">
            <button class="qbtn" aria-label="New document"><svg class="ico"><use href="#i-doc"/></svg></button><i class="caret"></i>
            <button class="qbtn" aria-label="Open"><svg class="ico"><use href="#i-open"/></svg></button><i class="caret"></i>
            <button class="qbtn" aria-label="Save"><svg class="ico"><use href="#i-save"/></svg></button><i class="caret"></i>
            <button class="qbtn" aria-label="Print"><svg class="ico"><use href="#i-print"/></svg></button><i class="caret"></i>
            <button class="qbtn" aria-label="Undo"><svg class="ico"><use href="#i-undo"/></svg></button><i class="caret faded"></i>
            <div class="select-tool">
              <button class="qbtn pressed" aria-label="Select"><svg class="ico"><use href="#i-cursor"/></svg></button><i class="caret"></i>
            </div>
            <button class="qbtn" aria-label="Rebuild"><svg class="ico"><use href="#i-traffic"/></svg></button>
            <button class="qbtn" aria-label="File properties"><svg class="ico"><use href="#i-list"/></svg></button>
            <button class="qbtn" aria-label="Options"><svg class="ico"><use href="#i-gear"/></svg></button><i class="caret"></i>
          </div>
          <div class="doc-title">Part1 *</div>
          <div class="win-buttons">
            <button aria-label="Minimize"><svg class="ico"><use href="#i-min"/></svg></button>
            <button aria-label="Maximize"><svg class="ico"><use href="#i-max"/></svg></button>
            <button aria-label="Close"><svg class="ico"><use href="#i-close"/></svg></button>
          </div>
        </header>

        <div class="ribbon">
          <div class="group group-project">
            <div class="stack">
              <button><svg class="ico"><use href="#i-wand"/></svg>Wizard</button>
              <button><svg class="ico"><use href="#i-page"/></svg>New</button>
              <button><svg class="ico"><use href="#i-clone"/></svg>Clone Project</button>
            </div>
            <button class="tool low"><svg class="ico"><use href="#i-notes"/></svg><span>General<br>Settings</span></button>
            <div class="stack">
              <button><svg class="ico"><use href="#i-comp"/></svg>Component Control</button>
              <button><svg class="ico"><use href="#i-cube"/></svg>Computational Domain</button>
              <button><svg class="ico"><use href="#i-infolder"/></svg>Project<i class="caret"></i></button>
            </div>
          </div>
          <div class="group group-input">
            <button class="tool"><svg class="ico"><use href="#i-cond"/></svg><span>Conditions</span><i class="caret"></i></button>
            <button class="tool"><svg class="ico"><use href="#i-src"/></svg><span>Sources</span><i class="caret"></i></button>
            <button class="tool low" disabled><svg class="ico"><use href="#i-pcb"/></svg><span>Smart<br>PCB</span></button>
            <button class="tool"><svg class="ico"><use href="#i-elec"/></svg><span>Electrical<br>Features</span><i class="caret"></i></button>
            <button class="tool">
              <svg class="ico" viewBox="0 0 18 18"><path d="M2 13l5-4 5 1 4 3-3 4H6z" fill="#e07060" stroke="#6a1810" stroke-width=".8"/><path d="M7 1v8M4.500 6.500L7 10l2.500-3.500" fill="none" stroke="#c01818" stroke-width="1.800"/><text class="load-f" x="10" y="8">F</text></svg>
              <span>Loads and<br>Constraints</span><i class="caret"></i>
            </button>
            <button class="tool"><svg class="ico"><use href="#i-flag"/></svg><span>Goals</span><i class="caret"></i></button>
          </div>
          <div class="group group-mesh">
            <button class="tool"><svg class="ico"><use href="#i-mesh"/></svg><span>Mesh<br>Settings</span><i class="caret"></i></button>
            <button class="tool"><svg class="ico"><use href="#i-em"/></svg><span>Electromagnetic<br>Mesh</span><i class="caret"></i></button>
            <button class="tool"><svg class="ico"><use href="#i-struct"/></svg><span>Structural<br>Mesh</span><i class="caret"></i></button>
          </div>
          <div class="group group-run">
            <button class="tool low"><svg class="ico"><use href="#i-run"/></svg><span>Run</span></button>
            <button class="tool low"><svg class="ico"><use href="#i-batch"/></svg><span>Batch<br>Run</span></button>
            <button class="tool"><svg class="ico"><use href="#i-solve"/></svg><span>Solve</span><i class="caret"></i></button>
          </div>
          <div class="group group-results">
            <button class="tool"><svg class="ico"><use href="#i-results"/></svg><span>Results</span><i class="caret"></i></button>
            <button class="tool"><svg class="ico"><use href="#i-grid"/></svg><span>Insert</span><i class="caret"></i></button>
            <button class="tool"><svg class="ico"><use href="#i-display"/></svg><span>Display</span><i class="caret"></i></button>
            <button class="tool"><svg class="ico"><use href="#i-probe"/></svg><span>Probes</span><i class="caret"></i></button>
            <button class="tool"><svg class="ico"><use href="#i-capture"/></svg><span>Screen<br>Capture</span><i class="caret"></i></button>
          </div>
          <div class="group group-tools">
            <div class="stack">
              <button><svg class="ico"><use href="#i-checkgeo"/></svg>Check Geometry</button>
              <button><svg class="ico"><use href="#i-engdb"/></svg>Engineering Database</button>
              <button><svg class="ico"><use href="#i-tools"/></svg>Tools<i class="caret"></i></button>
            </div>
          </div>
        </div>

        <main class="work">
          <div class="tabrow">
            <nav class="tabs">
              <button>Features</button>
              <button>Sketch</button>
              <button>Surfaces</button>
              <button>Sheet Metal</button>
              <button>Weldments</button>
              <button>Mold Tools</button>
              <button>Mesh Modeling</button>
              <button>Markup</button>
              <button>Evaluate</button>
              <button>MBD Dimensions</button>
              <button>Analysis Preparation</button>
              <button class="active">Flow Analysis</button>
            </nav>
            <div class="hud">
              <button aria-label="Zoom to fit"><svg class="ico"><use href="#i-zfit"/></svg></button>
              <button aria-label="Zoom to area"><svg class="ico"><use href="#i-zarea"/></svg></button>
              <button aria-label="Previous view"><svg class="ico"><use href="#i-prev"/></svg></button>
              <button aria-label="Section view"><svg class="ico"><use href="#i-section"/></svg></button>
              <button aria-label="View orientation"><svg class="ico"><use href="#i-orient"/></svg></button><i class="caret faded"></i>
              <button aria-label="Display style"><svg class="ico"><use href="#i-shade"/></svg></button><i class="caret faded"></i>
              <button aria-label="Hide/show items"><svg class="ico"><use href="#i-eye"/></svg></button><i class="caret faded"></i>
              <button aria-label="Edit appearance"><svg class="ico"><use href="#i-appear"/></svg></button>
              <button aria-label="Apply scene"><svg class="ico"><use href="#i-scene"/></svg></button><i class="caret faded"></i>
              <button aria-label="View settings"><svg class="ico"><use href="#i-monitor"/></svg></button><i class="caret faded"></i>
            </div>
            <div class="win-buttons doc-buttons">
              <button aria-label="Dock left"><svg class="ico"><use href="#i-dockl"/></svg></button>
              <button aria-label="Dock right"><svg class="ico"><use href="#i-dockr"/></svg></button>
              <button aria-label="Minimize document"><svg class="ico"><use href="#i-min"/></svg></button>
              <button aria-label="Restore document"><svg class="ico"><use href="#i-restore"/></svg></button>
              <button aria-label="Close document"><svg class="ico"><use href="#i-close"/></svg></button>
            </div>
          </div>

          <div class="columns">
            <aside class="sidebar">
              <div class="sidebar-tools">
                <button aria-label="Extruded surface"><svg class="ico"><use href="#i-extrude"/></svg></button>
                <button aria-label="Revolved surface"><svg class="ico"><use href="#i-revolve"/></svg></button>
                <button aria-label="Swept surface"><svg class="ico"><use href="#i-sweep"/></svg></button>
                <button aria-label="Lofted surface"><svg class="ico"><use href="#i-loft"/></svg></button>
                <button aria-label="Boundary surface"><svg class="ico"><use href="#i-sheet"/></svg></button>
                <button aria-label="Offset surface"><svg class="ico"><use href="#i-offset"/></svg></button>
                <button aria-label="Planar surface"><svg class="ico"><use href="#i-plane"/></svg></button>
                <button aria-label="Thicken"><svg class="ico"><use href="#i-thick"/></svg></button>
                <button aria-label="Filled surface"><svg class="ico"><use href="#i-fill"/></svg></button>
                <button aria-label="Ruled surface"><svg class="ico"><use href="#i-elbow"/></svg></button>
                <button aria-label="Delete face"><svg class="ico"><use href="#i-delface"/></svg></button>
                <button aria-label="Replace face"><svg class="ico"><use href="#i-replace"/></svg></button>
                <button aria-label="Knit surface"><svg class="ico"><use href="#i-knit"/></svg></button>
                <hr>
                <button aria-label="Extend surface"><svg class="ico"><use href="#i-dim1"/></svg></button>
                <button aria-label="Trim surface"><svg class="ico"><use href="#i-dim2"/></svg></button>
                <button aria-label="Untrim surface"><svg class="ico"><use href="#i-dim3"/></svg></button>
                <button aria-label="Fillet"><svg class="ico"><use href="#i-box"/></svg><i class="caret"></i></button>
                <hr>
                <button aria-label="Hole wizard"><svg class="ico"><use href="#i-hole"/></svg><i class="caret"></i></button>
                <button aria-label="Note"><svg class="ico" viewBox="0 0 18 18"><path d="M1.500 1.500h15v15h-15z" fill="#f6f6f6" stroke="#333"/><text class="note-a" x="3" y="14">A</text><circle cx="13" cy="5" r="1.700" fill="none" stroke="#333"/></svg><i class="caret"></i></button>
              </div>
            </aside>

            <section class="panel">
              <div class="panel-grip"><i></i></div>
              <nav class="panel-tabs">
                <button aria-label="Feature tree"><svg class="ico"><use href="#i-part"/></svg></button>
                <button aria-label="Properties"><svg class="ico"><use href="#i-list"/></svg></button>
                <button aria-label="Configurations"><svg class="ico"><use href="#i-config"/></svg></button>
                <button aria-label="Dimensions"><svg class="ico"><use href="#i-target"/></svg></button>
                <button aria-label="Display manager"><svg class="ico"><use href="#i-sphere"/></svg></button>
                <button class="active" aria-label="FLOEFD analysis"><svg class="ico"><use href="#i-floefd"/></svg></button>
              </nav>

              <div class="tree projects">
                <div class="row"><svg class="ico"><use href="#i-projects"/></svg>Projects</div>
                <ul>
                  <li>
                    <div class="row"><button class="toggle" aria-label="Collapse Default"></button><svg class="ico"><use href="#i-default"/></svg>Default</div>
                    <ul>
                      <li><div class="row"><svg class="ico"><use href="#i-flow"/></svg>Project</div></li>
                    </ul>
                  </li>
                </ul>
              </div>

              <div class="splitter"><span><i></i><i></i><i></i></span></div>

              <div class="tree">
                <div class="row"><svg class="ico"><use href="#i-flow"/></svg>Project</div>
                <ul>
                  <li>
                    <div class="row"><button class="toggle" aria-label="Collapse Input Data"></button><svg class="ico"><use href="#i-infolder"/></svg>Input Data</div>
                    <ul>
                      <li><div class="row"><svg class="ico"><use href="#i-cube"/></svg>Computational Domain</div></li>
                      <li><div class="row"><svg class="ico"><use href="#i-fluid"/></svg>Fluid Subdomains</div></li>
                      <li><div class="row"><svg class="ico"><use href="#i-cond"/></svg>Boundary Conditions</div></li>
                      <li>
                        <div class="row"><button class="toggle" aria-label="Collapse Goals"></button><svg class="ico"><use href="#i-flag"/></svg>Goals</div>
                        <ul>
                          <li><div class="row"><svg class="ico"><use href="#i-flag"/></svg>GG Average Static Pressure 1</div></li>
                          <li><div class="row"><svg class="ico"><use href="#i-flag"/></svg>GG Average Velocity 2</div></li>
                          <li><div class="row"><svg class="ico"><use href="#i-flag"/></svg>GG Average Velocity (X) 3</div></li>
                        </ul>
                      </li>
                      <li>
                        <div class="row"><button class="toggle" aria-label="Collapse Mesh"></button><svg class="ico"><use href="#i-mesh"/></svg>Mesh</div>
                        <ul>
                          <li><div class="row"><svg class="ico"><use href="#i-mesh"/></svg>Global Mesh</div></li>
                        </ul>
                      </li>
                    </ul>
                  </li>
                  <li>
                    <div class="row"><button class="toggle" aria-label="Collapse Results"></button><svg class="ico"><use href="#i-results"/></svg>Results (1.fld)</div>
                    <ul>
                      <li><div class="row"><svg class="ico"><use href="#i-scenes"/></svg>Scenes</div></li>
                      <li><div class="row"><svg class="ico"><use href="#i-grid"/></svg>Mesh</div></li>
                      <li>
                        <div class="row"><button class="toggle" aria-label="Collapse Cut Plots"></button><svg class="ico"><use href="#i-cut"/></svg>Cut Plots</div>
                        <ul>
                          <li><div class="row"><svg class="ico"><use href="#i-cutgray"/></svg>Cut Plot 1</div></li>
                        </ul>
                      </li>
                      <li>
                        <div class="row"><button class="toggle" aria-label="Collapse Surface Plots"></button><svg class="ico"><use href="#i-surf"/></svg>Surface Plots</div>
                        <ul>
                          <li><div class="row"><svg class="ico"><use href="#i-surfgray"/></svg>Surface Plot 1</div></li>
                        </ul>
                      </li>
                      <li><div class="row"><svg class="ico"><use href="#i-iso"/></svg>Isosurfaces</div></li>
                      <li>
                        <div class="row"><button class="toggle" aria-label="Collapse Flow Trajectories"></button><svg class="ico"><use href="#i-flow"/></svg>Flow Trajectories</div>
                        <ul>
                          <li><div class="row"><svg class="ico"><use href="#i-flowgray"/></svg>Flow Trajectories 1</div></li>
                        </ul>
                      </li>
                      <li><div class="row"><svg class="ico"><use href="#i-particle"/></svg>Particle Studies</div></li>
                      <li><div class="row"><svg class="ico"><use href="#i-point"/></svg>Point Parameters</div></li>
                      <li><div class="row"><svg class="ico"><use href="#i-surfpar"/></svg>Surface Parameters</div></li>
                      <li><div class="row"><svg class="ico"><use href="#i-volpar"/></svg>Volume Parameters</div></li>
                      <li><div class="row"><svg class="ico"><use href="#i-xy"/></svg>XY Plots</div></li>
                      <li><div class="row"><svg class="ico"><use href="#i-goalplot"/></svg>Goal Plots</div></li>
                      <li><div class="row"><svg class="ico"><use href="#i-report"/></svg>Report</div></li>
                      <li><div class="row"><svg class="ico"><use href="#i-anim"/></svg>Animations</div></li>
                      <li><div class="row"><svg class="ico"><use href="#i-results"/></svg>Export Results</div></li>
                    </ul>
                  </li>
                </ul>
              </div>
              <button class="panel-handle" aria-label="Collapse panel"></button>
            </section>

            <section class="viewport">
              <svg class="model" viewBox="388 148 1526 826" role="img" aria-label="Wing model">
                <defs>
                  <linearGradient id="g-nose" gradientUnits="userSpaceOnUse" x1="728" y1="380" x2="691" y2="445">
                    <stop offset="0" stop-color="#5a5a5a"/><stop offset=".42" stop-color="#6a6a6a"/><stop offset=".7" stop-color="#505050"/><stop offset="1" stop-color="#3e3e3e"/>
                  </linearGradient>
                </defs>
                <g stroke="#0c0c0c" stroke-width="1.300" stroke-linejoin="round">
                  <path d="M728 380C770 354 820 343 865 335C905 328 960 331 1007 339L1593 677L1500 690L1315 717Z" fill="#5b5b5b"/>
                  <path d="M728 380C712 390 701 412 698 433C697 443 700 449 706 454L1292 791L1300 740L1315 717Z" fill="url(#g-nose)"/>
                  <path d="M1315 717C1340 703 1370 693 1397 688C1440 675 1475 669 1507 669C1535 669 1566 673 1593 677C1598 679 1600 684 1599 689C1598 698 1592 707 1585 709C1570 707 1560 705 1547 706C1515 708 1480 722 1453 730C1425 738 1400 746 1383 753C1360 762 1345 769 1335 777C1325 783 1318 789 1312 791C1305 795 1296 794 1292 791C1285 785 1283 778 1284 768C1286 745 1297 728 1315 717Z" fill="#323232"/>
                </g>
                <g stroke="#0a6a12" fill="#0a6a12" stroke-width="1.500">
                  <path d="M729 416V380M729 416L756 399M729 416L756 432" fill="none"/>
                  <path d="M729 377l4 10h-8zM763 395l-5 9-6-7zM763 436l-12 0 5-9z" stroke="none"/>
                </g>
                <g class="axis axis-part">
                  <text x="730" y="373">Y</text><text x="766" y="394">X</text><text x="766" y="435">Z</text>
                </g>
                <path d="M428 916l18-11" stroke="#f0a8a0" stroke-width="3"/><path d="M442 903l6 3-3 2z" fill="#b02020"/>
                <path d="M428 916v-20" stroke="#14a014" stroke-width="3"/><path d="M428 891l4 8-4 5-4-5z" fill="#0c8c14"/>
                <path d="M428 916l13 9" stroke="#10107c" stroke-width="4"/><path d="M438 921l10 5-4 4-7-3z" fill="#10108c"/>
                <g class="axis axis-triad">
                  <text x="425" y="887" fill="#3cc03c">Y</text><text x="451" y="901" fill="#e05858">X</text><text x="451" y="931" fill="#3030b0">Z</text>
                </g>
              </svg>
              <p class="iteration">Iteration = 41</p>
              <p class="watermark"><span class="cjk">莫西网</span>www.3dmox.com</p>
            </section>
          </div>

          <div class="sheets">
            <div class="sheet-nav">
              <button aria-label="First">|◀</button><button aria-label="Previous">◀</button><button aria-label="Next">▶</button><button aria-label="Last">▶|</button>
            </div>
            <button class="sheet active">Model</button>
            <button class="sheet">Motion Study 1</button>
          </div>
        </main>

        <footer class="statusbar">
          <span class="product">FLOEFD</span>
          <span class="editing">Editing Part</span>
          <span class="units">IPS</span>
          <i class="caret up"></i>
          <svg class="ico"><use href="#i-tag"/></svg>
        </footer>
      </div>
    </div>

    <div class="paintbar">
      <span class="cell"><svg class="ico"><use href="#i-move"/></svg></span>
      <span class="cell"><svg class="ico"><use href="#i-select"/></svg></span>
      <span class="cell"><svg class="ico"><use href="#i-size"/></svg>1152 × 648px</span>
      <span class="cell"><svg class="ico"><use href="#i-disk"/></svg>Size: 353.7KB</span>
      <div class="zoom">
        <label for="zoom">100%</label>
        <button aria-label="Zoom out">−</button>
        <input id="zoom" type="range" min="0" max="100" value="50">
        <button aria-label="Zoom in">+</button>
      </div>
    </div>

    <div class="taskbar">
      <div class="pinned">
        <button class="tb-icon" aria-label="Start"><svg class="ico"><use href="#i-win"/></svg></button>
        <button class="tb-icon" aria-label="Search"><svg class="ico"><use href="#i-search"/></svg></button>
        <button class="tb-icon" aria-label="Task view"><svg class="ico"><use href="#i-switch"/></svg></button>
        <button class="tb-icon" aria-label="Calculator"><svg class="ico-l"><use href="#i-calc"/></svg></button>
      </div>
      <button class="task"><svg class="ico-l"><use href="#i-dir"/></svg>AIR FOIL</button>
      <button class="task"><svg class="ico-l"><use href="#i-dir"/></svg>New folder</button>
      <button class="task active">
        <svg class="ico-l" viewBox="0 0 24 24"><path d="M0 0h24v24H0z" fill="#0c3c50"/><path d="M0 8h3v16H0zM0 21h24v3H0z" fill="#1f9aa6"/><text class="efd" x="4" y="17">E<tspan class="efd-sub">FD</tspan></text></svg>
        FLOEFD - [Part1 *]
      </button>
      <button class="task"><svg class="ico-l"><use href="#i-paint"/></svg>02 - Paint</button>
      <div class="tray">
        <svg class="ico"><use href="#i-chev"/></svg>
        <svg class="ico"><use href="#i-globe"/></svg>
        <svg class="ico"><use href="#i-sound"/></svg>
        <div class="clock">8:56 AM<br>5/28/2023</div>
      </div>
    </div>
  </body>
</html>
```
FILE: styles.css
```css
* {
  box-sizing: border-box;
}

body {
  margin: 0;
  height: 100vh;
  display: flex;
  flex-direction: column;
  overflow: hidden;
  font-family: "Open Sans", "Noto Sans", sans-serif;
  font-size: 12px;
  color: #111;
}

button {
  font: inherit;
  color: inherit;
  background: none;
  border: 0;
  padding: 0;
  margin: 0;
}

p {
  margin: 0;
}

.sprite {
  position: absolute;
  width: 0;
  height: 0;
}

.ico {
  width: 18px;
  height: 18px;
  flex: none;
  display: block;
}

.ico-l {
  width: 24px;
  height: 24px;
  flex: none;
  display: block;
}

.caret {
  flex: none;
  width: 0;
  height: 0;
  border: 3px solid transparent;
  border-top: 4px solid #222;
  border-bottom: 0;
}

.caret.faded {
  border-top-color: #999;
}

.caret.up {
  border-top: 0;
  border-bottom: 4px solid #222;
}

/* window */
.desktop {
  flex: 1;
  min-height: 0;
  display: flex;
  padding: 0 2px 7px 9px;
  background: linear-gradient(#dfe9ee 0 24px, #0f6fc4 24px 46px, #d9e2ec 46px 140px, #b9c7dc 150px 80%, #b4bfc9);
}

.window {
  flex: 1;
  min-width: 0;
  display: flex;
  flex-direction: column;
  background: #f7f7f7;
  border: 1px solid #5c6470;
  font-size: 11px;
}

.titlebar {
  height: 38px;
  flex: none;
  display: flex;
  align-items: center;
  padding-top: 7px;
  border-bottom: 1px solid #777;
  box-shadow: inset 0 7px #fff;
}

.logo {
  align-self: flex-start;
  flex: none;
  width: 131px;
  height: 35px;
  margin-left: 10px;
  border: 1px solid #888;
  border-top: 0;
  background: linear-gradient(100deg, #fff, #d9d9d9);
  font: bold 26px/32px "Liberation Sans", sans-serif;
  text-align: center;
  color: #fafafa;
  text-shadow: 1px 1px 2px #555, -1px 0 1px #999;
  z-index: 1;
}

.logo-arrow {
  width: 22px;
  height: 30px;
  border-right: 1px solid #777;
}

.logo-arrow::before {
  content: "";
  display: block;
  width: 0;
  margin-left: 7px;
  border: 7px solid transparent;
  border-left: 8px solid #333;
  border-right: 0;
}

.quick {
  display: flex;
  align-items: center;
  margin-left: 29px;
  padding-top: 2px;
}

.qbtn {
  padding: 4px;
}

.quick .caret {
  margin: 0 4px 0 3px;
}

.select-tool {
  display: flex;
  align-items: center;
  border: 1px solid #999;
}

.qbtn.pressed {
  background: #b8b8b8;
  border-right: 1px solid #888;
}

.doc-title {
  flex: 1;
  text-align: center;
  padding: 2px 65px 0 0;
}

.win-buttons {
  display: flex;
  gap: 8px;
  padding: 2px 4px 0 0;
  color: #333;
}

/* ribbon */
.ribbon {
  height: 87px;
  flex: none;
  display: flex;
  border-bottom: 1px solid #777;
}

.group {
  display: flex;
  justify-content: space-between;
  padding: 6px 6px 2px;
  line-height: 13px;
  background: linear-gradient(#c4c4c4, #c4c4c4) right 6px / 1px 76px no-repeat;
}

.group-project {
  width: 336px;
  padding-right: 8px;
}

.group-input {
  width: 321px;
}

.group-mesh {
  width: 207px;
}

.group-run {
  width: 109px;
}

.group-results {
  width: 232px;
}

.group-tools {
  width: 170px;
  background: none;
}

.stack {
  display: flex;
  flex-direction: column;
  flex: 1;
}

.group-project .stack:first-child {
  flex: none;
}

.stack button {
  height: 26px;
  display: flex;
  align-items: center;
  gap: 7px;
  white-space: nowrap;
}

.stack .caret {
  margin-left: auto;
}

.group-project .tool {
  margin: 0 8px 0 15px;
}

.tool {
  display: flex;
  flex-direction: column;
  align-items: center;
  padding: 6px 0 8px;
  white-space: nowrap;
}

.tool.low {
  padding-top: 13px;
}

.tool span {
  margin-top: 1px;
}

.tool .caret {
  margin-top: auto;
}

.tool:disabled {
  color: #bcbcbc;
}

.load-f {
  font: bold 9px "Liberation Sans", sans-serif;
  fill: #333;
}

/* work area */
.work {
  flex: 1;
  min-height: 0;
  display: flex;
  flex-direction: column;
  background:
    linear-gradient(rgba(255, 255, 255, 0) 54%, rgba(255, 255, 255, .75) 63%, #fdfdfe 74%),
    radial-gradient(ellipse 34% 70% at 82% 44%, #d5d8e4, rgba(213, 216, 228, 0)),
    linear-gradient(rgba(226, 229, 239, 0) 28%, #dfe2ec 54%),
    linear-gradient(90deg, #fff 55%, #ececf3 75%, #f4f5f8);
}

.tabrow {
  display: flex;
  height: 22px;
  flex: none;
}

.tabs {
  display: flex;
  border-bottom: 1px solid #666;
  background: #d4d2d2;
}

.tabs button {
  padding: 0 8px 0 9px;
  color: #222;
  border-right: 1px solid #666;
  white-space: nowrap;
}

.tabs .active {
  margin-bottom: -1px;
  background: #fff;
  border-bottom: 1px solid #666;
  font-weight: 600;
}

.hud {
  display: flex;
  align-items: center;
  gap: 8px;
  margin-left: 38px;
  padding-top: 8px;
}

.hud .caret {
  margin-left: -1px;
  margin-right: 1px;
}

.doc-buttons {
  align-items: center;
  margin-left: auto;
  padding: 8px 10px 0 0;
  color: #8a8d96;
}

.columns {
  flex: 1;
  min-height: 0;
  display: flex;
}

.sidebar {
  width: 46px;
  flex: none;
  background: #f7f7f7;
}

.sidebar-tools {
  display: flex;
  flex-direction: column;
  margin-top: 2px;
  padding: 9px 0 8px;
  border-top: 2px dotted #999;
  border-bottom: 1px solid #777;
}

.sidebar button {
  height: 26px;
  padding-left: 7px;
  display: flex;
  align-items: center;
  gap: 10px;
}

.sidebar hr {
  width: 40px;
  height: 1px;
  margin: 3px 0 4px 6px;
  border: 0;
  background: #777;
}

.note-a {
  font: bold 13px "Liberation Serif", serif;
  fill: #222;
}

.panel {
  position: relative;
  width: 332px;
  flex: none;
  padding: 4px 3px 3px 2px;
  display: flex;
  flex-direction: column;
  background: #f7f7f7;
  border-right: 1px solid #777;
}

.panel-grip {
  height: 16px;
  flex: none;
  display: flex;
  align-items: center;
  justify-content: center;
  border: 1px solid #bbb;
  border-width: 1px 0;
}

.panel-grip i {
  width: 6px;
  height: 6px;
  border: 1px solid #888;
  border-radius: 50%;
}

.panel-tabs {
  display: flex;
  height: 26px;
  flex: none;
  margin-top: 4px;
  padding-left: 1px;
  border-bottom: 1px solid #888;
}

.panel-tabs button {
  width: 40px;
  display: flex;
  align-items: center;
  justify-content: center;
  background: #d4d2d2;
  border-top: 1px solid #777;
  border-right: 1px solid #777;
}

.panel-tabs .active {
  margin-bottom: -1px;
  background: #f9f9f9;
}

.tree {
  padding-left: 3px;
}

.tree.projects {
  padding-top: 4px;
  height: 79px;
  flex: none;
}

.tree ul {
  list-style: none;
  margin: 0;
  padding: 0;
}

.tree ul ul {
  padding-left: 23px;
}

/* dotted guide running down beside the items */
.tree li {
  background: repeating-linear-gradient(#888 0 1px, transparent 1px 2px) 9px 0 / 1px 100% no-repeat;
}

.tree li:last-child {
  background-size: 1px 10px;
}

.row {
  display: flex;
  align-items: center;
  height: 20px;
  gap: 6px;
  white-space: nowrap;
}

.tree li > .row::before {
  content: "";
  width: 12px;
  margin-left: 9px;
  margin-right: -4px;
  height: 1px;
  background: repeating-linear-gradient(90deg, #888 0 1px, transparent 1px 2px);
}

.tree li > .row:has(.toggle)::before {
  display: none;
}

.toggle {
  width: 9px;
  height: 9px;
  margin: 0 3px 0 5px;
  flex: none;
  border: 1px solid #888;
  background: linear-gradient(#333, #333) center / 5px 1px no-repeat #fff;
}

.splitter {
  height: 6px;
  flex: none;
  display: flex;
  justify-content: center;
  border: 2px solid #74788c;
  border-width: 2px 0;
  background: #c4c6d0;
}

.splitter span {
  display: flex;
  align-items: center;
  gap: 4px;
  margin: -2px 0;
  padding: 0 4px;
  background: #f7f7f7;
}

.splitter i {
  border: 2px solid transparent;
  border-top: 0;
  border-bottom: 3px solid #445;
}

.panel-handle {
  position: absolute;
  left: 100%;
  top: 382px;
  width: 9px;
  height: 39px;
  background: radial-gradient(circle, #999 2px, #f7f7f7 3px);
  border: 1px solid #777;
  border-left: 0;
}

.viewport {
  position: relative;
  flex: 1;
  min-width: 0;
}

.model {
  display: block;
  width: 100%;
  height: 100%;
}

.axis {
  font-family: "Liberation Sans", sans-serif;
  font-size: 13px;
}

.axis-part {
  fill: #0f4418;
}

.axis-triad {
  font-size: 9px;
}

.iteration {
  position: absolute;
  left: 236px;
  top: 25px;
  font: 12px/16px "Liberation Sans", sans-serif;
}

.watermark {
  position: absolute;
  left: 190px;
  top: 327px;
  font: 73px/110px "Liberation Serif", "Noto Sans CJK SC", serif;
  white-space: nowrap;
  color: #dfe2e4;
  text-shadow: 1px 1px 1px #4a4a4a, -1px -1px 1px #fff8;
}

.watermark .cjk {
  font-family: "Noto Sans CJK SC", sans-serif;
  font-size: 80px;
  font-weight: 100;
}

.sheets {
  height: 16px;
  flex: none;
  display: flex;
  padding-left: 48px;
  background: #f7f7f7;
  border-top: 1px solid #777;
  border-bottom: 1px solid #777;
}

.sheet-nav {
  display: flex;
}

.sheet-nav button {
  width: 17px;
  border-right: 1px solid #777;
  background: #b0b0b0;
  color: #888;
  font-size: 8px;
  line-height: 14px;
}

.sheet {
  padding: 0 10px;
  line-height: 14px;
  border-right: 1px solid #777;
  background: #d4d2d2;
}

.sheet:last-child {
  padding-right: 18px;
}

.sheet.active {
  background: #fff;
  font-weight: 700;
}

.statusbar {
  height: 18px;
  flex: none;
  display: flex;
  align-items: center;
  padding: 1px 20px 0 1px;
}

.editing {
  margin-left: auto;
}

.units {
  margin-left: 128px;
  margin-right: 28px;
}

.statusbar .ico {
  margin-left: 26px;
}

/* paint status strip */
.paintbar {
  height: 25px;
  flex: none;
  display: flex;
  background: linear-gradient(#e2e2e2, #f0f0f0 8px);
}

.cell {
  width: 156px;
  display: flex;
  align-items: center;
  gap: 2px;
  padding-left: 4px;
  border-right: 1px solid #d2d2d2;
}

.cell:first-child {
  padding-left: 0;
}

.zoom {
  margin-left: auto;
  padding-left: 20px;
  display: flex;
  align-items: center;
  border-left: 1px solid #d2d2d2;
}

.zoom button {
  width: 16px;
  height: 16px;
  margin: 0 6px;
  border: 1px solid #666;
  border-radius: 50%;
  line-height: 12px;
}

.zoom button:last-child {
  margin-right: 0;
}

.zoom input {
  appearance: none;
  width: 86px;
  height: 18px;
  margin: 0 5px;
  background: linear-gradient(#ccc, #ccc) center / 100% 3px no-repeat;
}

.zoom input::-webkit-slider-thumb {
  appearance: none;
  width: 10px;
  height: 16px;
  background: #0c78d8;
  clip-path: polygon(0 0, 100% 0, 100% 75%, 50% 100%, 0 75%);
}

/* taskbar */
.taskbar {
  height: 36px;
  flex: none;
  display: flex;
  background: #1c1c1c;
  color: #fff;
}

.pinned {
  width: 198px;
  display: flex;
}

.tb-icon {
  flex: 1;
  display: flex;
  align-items: center;
  justify-content: center;
}

.task {
  width: 160px;
  padding-left: 10px;
  display: flex;
  align-items: center;
  gap: 4px;
  white-space: nowrap;
}

.task.active {
  background: #4a4a4a;
}

.efd {
  font: bold 12px "Liberation Sans", sans-serif;
  fill: #fff;
}

.efd-sub {
  font-size: 7px;
}

.tray {
  margin-left: auto;
  display: flex;
  align-items: center;
  gap: 5px;
  padding-right: 6px;
}

.clock {
  margin-left: 4px;
  padding-top: 2px;
  text-align: center;
  line-height: 17px;
}
```
